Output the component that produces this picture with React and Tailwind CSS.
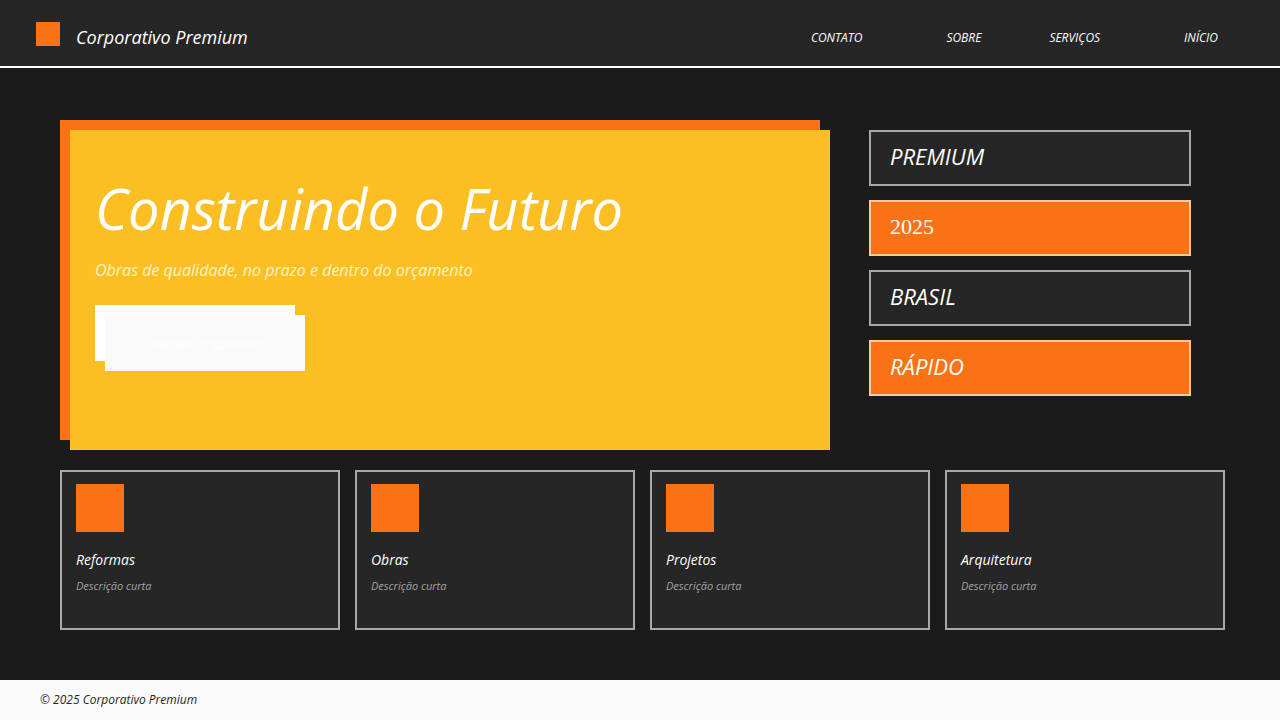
import React from "react";

const sans = { fontFamily: '"Open Sans", "Noto Sans", sans-serif' };

const navItems = [
  { label: "CONTATO", cls: "" },
  { label: "SOBRE", cls: "ml-[84px]" },
  { label: "SERVIÇOS", cls: "ml-[68px]" },
  { label: "INÍCIO", cls: "ml-[84px]" },
];

const tags = [
  { label: "PREMIUM", orange: false },
  { label: "2025", orange: true, serif: true },
  { label: "BRASIL", orange: false },
  { label: "RÁPIDO", orange: true },
];

const services = ["Reformas", "Obras", "Projetos", "Arquitetura"];

export default function App() {
  return (
    <div className="w-[1280px] h-[720px] flex flex-col bg-[#1b1b1b] italic overflow-hidden" style={sans}>
      {/* Header */}
      <header className="h-[68px] shrink-0 bg-[#262626] border-b-2 border-white flex items-center pt-[2px] pl-9 pr-[62px]">
        <div className="w-6 h-6 bg-[#f97316]" />
        <span className="ml-4 mt-[6px] text-[18px] text-white">Corporativo Premium</span>
        <nav className="ml-auto mt-[8px] flex items-center text-[12px] text-white">
          {navItems.map((n) => (
            <a key={n.label} className={n.cls}>
              {n.label}
            </a>
          ))}
        </nav>
      </header>

      {/* Main */}
      <main className="flex-1 px-[60px] pt-[62px]">
        <div className="flex items-start">
          {/* Hero */}
          <section className="shrink-0 ml-[10px] w-[760px] h-[320px] bg-[#fbbf24] shadow-[-10px_-10px_0_#f97316] px-[25px] pt-[43px]">
            <h1 className="text-[56px] leading-[70px] text-white font-normal">Construindo o Futuro</h1>
            <p className="mt-[15px] text-[16px] leading-6 text-[#fef3c7]">
              Obras de qualidade, no prazo e dentro do orçamento
            </p>
            <button className="mt-[33px] ml-[10px] w-[200px] h-[56px] bg-[#fafafa] shadow-[-10px_-10px_0_#ffffff] text-white text-[14px] italic">
              Solicitar orçamento
            </button>
          </section>

          {/* Tags */}
          <aside className="shrink-0 ml-[39px] w-[322px] flex flex-col gap-[14px]">
            {tags.map((t) => (
              <div
                key={t.label}
                className={
                  "h-[56px] border-2 border-white/60 flex items-center pl-[19px] pb-[3px] text-[22px] text-white " +
                  (t.orange ? "bg-[#f97316]" : "bg-[#262626]")
                }
                style={t.serif ? { fontFamily: '"Liberation Serif", serif', fontStyle: "normal" } : undefined}
              >
                {t.label}
              </div>
            ))}
          </aside>
        </div>

        {/* Services */}
        <div className="mt-[20px] flex gap-[15px] w-[1165px]">
          {services.map((s) => (
            <div key={s} className="shrink-0 w-[280px] h-[160px] border-2 border-white/60 bg-[#262626] px-[14px] pt-3">
              <div className="w-12 h-12 bg-[#f97316]" />
              <div className="mt-[18px] text-[14px] leading-5 text-white">{s}</div>
              <div className="mt-[8px] text-[11px] leading-4 text-[#a3a3a3]">Descrição curta</div>
            </div>
          ))}
        </div>
      </main>

      {/* Footer */}
      <footer className="h-10 shrink-0 bg-[#fafafa] flex items-center px-10 text-[12px] text-[#262626]">
        © 2025 Corporativo Premium
      </footer>
    </div>
  );
}
